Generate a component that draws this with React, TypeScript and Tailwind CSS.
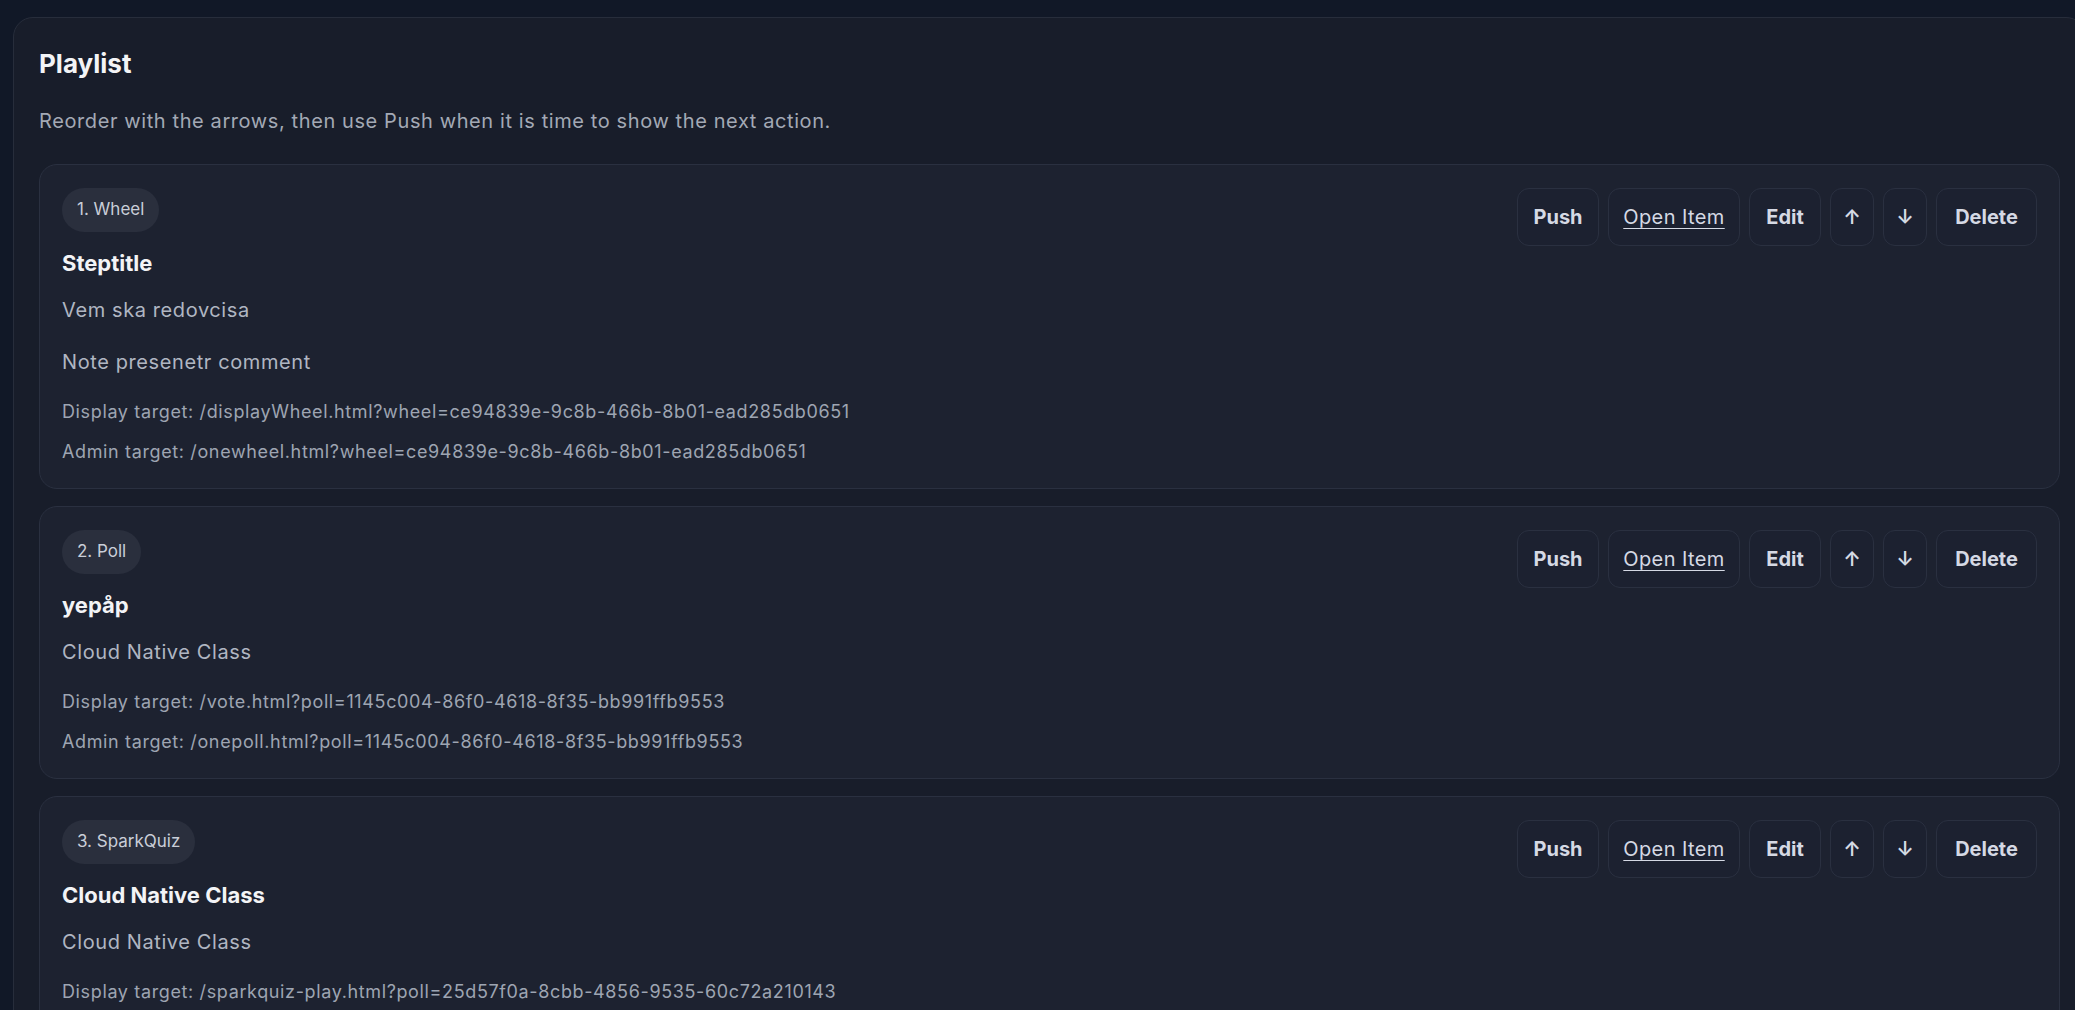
type PlaylistItem = {
  badge: string;
  title: string;
  lines: string[];
  display: string;
  admin: string;
};

const items: PlaylistItem[] = [
  {
    badge: '1. Wheel',
    title: 'Steptitle',
    lines: ['Vem ska redovcisa', 'Note presenetr comment'],
    display: '/displayWheel.html?wheel=ce94839e-9c8b-466b-8b01-ead285db0651',
    admin: '/onewheel.html?wheel=ce94839e-9c8b-466b-8b01-ead285db0651',
  },
  {
    badge: '2. Poll',
    title: 'yepåp',
    lines: ['Cloud Native Class'],
    display: '/vote.html?poll=1145c004-86f0-4618-8f35-bb991ffb9553',
    admin: '/onepoll.html?poll=1145c004-86f0-4618-8f35-bb991ffb9553',
  },
  {
    badge: '3. SparkQuiz',
    title: 'Cloud Native Class',
    lines: ['Cloud Native Class'],
    display: '/sparkquiz-play.html?poll=25d57f0a-8cbb-4856-9535-60c72a210143',
    admin: '/sparkquiz-host.html?poll=25d57f0a-8cbb-4856-9535-60c72a210143',
  },
];

function ActionButtons() {
  const base =
    'h-[58px] rounded-[12px] border border-[#2a3040] bg-[#1c2130] text-[20px] text-[#d5d9e4] flex items-center justify-center';
  return (
    <div className="flex items-start gap-[9px] shrink-0">
      <button className={`${base} w-[82px] font-bold`}>Push</button>
      <button className={`${base} w-[132px] font-normal tracking-[0.02em] underline underline-offset-4 decoration-1`}>
        Open Item
      </button>
      <button className={`${base} w-[72px] font-bold`}>Edit</button>
      <button className={`${base} w-[44px] font-semibold`}>↑</button>
      <button className={`${base} w-[44px] font-semibold`}>↓</button>
      <button className={`${base} w-[101px] font-bold`}>Delete</button>
    </div>
  );
}

function ItemCard({ item }: { item: PlaylistItem }) {
  return (
    <div className="flex justify-between rounded-[18px] border border-[#2a3040] bg-[#1d2230] px-[22px] pt-[23px] pb-[22px]">
      <div className="flex flex-col items-start">
        <span className="h-[44px] px-[15px] flex items-center rounded-full bg-[#2a2f3d] text-[17px] text-[#c9ced8]">
          {item.badge}
        </span>
        <h3 className="mt-[15px] text-[22px] leading-8 font-bold text-[#f3f4f6]">{item.title}</h3>
        {item.lines.map((line, i) => (
          <p
            key={line + i}
            className={`${i === 0 ? 'mt-4' : 'mt-[22px]'} text-[20px] leading-[30px] tracking-[0.03em] text-[#b0b6c2]`}
          >
            {line}
          </p>
        ))}
        <p className="mt-[21px] text-[18px] leading-7 tracking-[0.035em] text-[#9ea5b2]">
          Display target: {item.display}
        </p>
        <p className="mt-3 text-[18px] leading-7 tracking-[0.035em] text-[#9ea5b2]">Admin target: {item.admin}</p>
      </div>
      <ActionButtons />
    </div>
  );
}

export default function App() {
  return (
    <div
      className="h-screen w-full overflow-hidden bg-[#111827] pt-[17px] pl-[13px]"
      style={{ fontFamily: 'Inter, "Noto Sans", sans-serif' }}
    >
      <section className="w-[2073px] rounded-[20px] border border-[#272d3b] bg-[#181d2a] px-[25px] pt-[28px] pb-8">
        <h2 className="text-[26px] leading-9 font-bold text-[#f3f4f6]">Playlist</h2>
        <p className="mt-6 text-[20px] leading-[30px] tracking-[0.03em] text-[#a3a9b5]">
          Reorder with the arrows, then use Push when it is time to show the next action.
        </p>
        <div className="mt-[28px] flex flex-col gap-[17px]">
          {items.map((item) => (
            <ItemCard key={item.badge} item={item} />
          ))}
        </div>
      </section>
    </div>
  );
}
